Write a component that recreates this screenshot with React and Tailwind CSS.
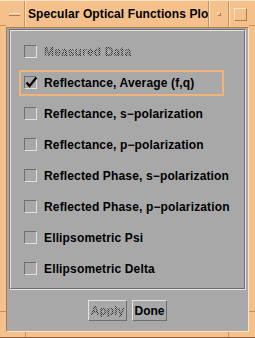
import { useState } from 'react'

const items = [
  { label: 'Measured Data', disabled: true },
  { label: 'Reflectance, Average (f,q)', checked: true, focus: true },
  { label: 'Reflectance, s\u2212polarization' },
  { label: 'Reflectance, p\u2212polarization' },
  { label: 'Reflected Phase, s\u2212polarization' },
  { label: 'Reflected Phase, p\u2212polarization' },
  { label: 'Ellipsometric Psi' },
  { label: 'Ellipsometric Delta' },
]

const stipple =
  'bg-[repeating-conic-gradient(#303030_0_25%,transparent_0_50%)] bg-[length:2px_2px] bg-clip-text text-transparent'

function CheckBox({ checked }) {
  return (
    <div className="relative w-[13px] h-[13px] shrink-0 border border-t-[#707070] border-l-[#707070] border-b-[#e0e0e0] border-r-[#e0e0e0] bg-[#a8a8a8]">
      {checked && (
        <svg className="absolute left-[0px] top-[-1px]" width="13" height="13" viewBox="0 0 13 13">
          <path d="M1.5 6.5 L4.5 10 L11.5 1.5" fill="none" stroke="#000" strokeWidth="2.2" />
        </svg>
      )}
    </div>
  )
}

function Row({ item, onToggle }) {
  return (
    <div className="h-[31px] flex items-center">
      <div
        className={`w-[205px] h-[26px] ml-[8px] flex items-center gap-[7px] pl-[3px] border-2 ${item.focus ? 'border-[#f0b478]' : 'border-transparent'}`}
        onClick={onToggle}
      >
        <CheckBox checked={item.checked} />
        <span
          className={`text-[12px] font-bold leading-none whitespace-nowrap tracking-[0.15px] ${item.disabled ? stipple : 'text-black'}`}
        >
          {item.label}
        </span>
      </div>
    </div>
  )
}

export default function App() {
  const [rows, setRows] = useState(items)

  function toggle(i) {
    if (rows[i].disabled) return
    setRows(rows.map((r, j) => (j === i ? { ...r, checked: !r.checked } : r)))
  }

  return (
    <div
      className="w-[255px] h-[338px] bg-[#f4c08c] flex flex-col relative border-t border-t-[#fde2c4] border-b border-b-[#8a5e36] overflow-hidden"
      style={{ fontFamily: '"Liberation Sans", Arial, sans-serif' }}
    >
      {/* title bar */}
      <div className="h-[26px] flex shrink-0">
        <div className="w-[25px] flex items-center justify-center pl-[4px] border-r border-r-[#c8915c]">
          <div className="w-[11px] h-[3px] border-t border-t-[#fde2c4] border-b border-b-[#b07c48] bg-[#f4c08c]" />
        </div>
        <div className="flex-1 min-w-0 flex items-center pl-[2px] border-l border-l-[#fde2c4] border-r border-r-[#c8915c] overflow-hidden">
          <span className="text-[12px] font-bold text-black whitespace-nowrap leading-none tracking-[0.1px]">Specular Optical Functions Plo</span>
        </div>
        <div className="w-[20px] flex items-center justify-center border-l border-l-[#fde2c4] border-r border-r-[#c8915c]">
          <div className="w-[4px] h-[4px] border border-t-[#fde2c4] border-l-[#fde2c4] border-b-[#b07c48] border-r-[#b07c48]" />
        </div>
        <div className="w-[26px] flex items-center justify-center pr-[4px] border-l border-l-[#fde2c4]">
          <div className="w-[13px] h-[13px] border border-t-[#fde2c4] border-l-[#fde2c4] border-b-[#b07c48] border-r-[#b07c48]" />
        </div>
      </div>

      {/* body */}
      <div className="flex-1 mx-[6px] mb-[5px] bg-[#a8a8a8] flex flex-col border-t border-t-[#b07c48] border-l border-l-[#b07c48] border-b border-b-[#fde2c4] border-r border-r-[#fde2c4]">
        <div className="mt-[1px] mx-[2px] h-[261px] border border-t-[#6e6e6e] border-l-[#6e6e6e] border-b-[#e4e4e4] border-r-[#e4e4e4]">
          <div className="h-full border border-t-[#e4e4e4] border-l-[#e4e4e4] border-b-[#6e6e6e] border-r-[#6e6e6e] pt-[5px]">
            {rows.map((item, i) => (
              <Row key={item.label} item={item} onToggle={() => toggle(i)} />
            ))}
          </div>
        </div>
        <div className="flex justify-center gap-[5px] mt-[10px]">
          <button className="w-[39px] h-[21px] border border-t-[#e4e4e4] border-l-[#e4e4e4] border-b-[#6e6e6e] border-r-[#6e6e6e] flex items-center justify-center">
            <span className={`text-[12px] font-bold leading-none ${stipple}`}>Apply</span>
          </button>
          <button className="w-[35px] h-[21px] border border-t-[#e4e4e4] border-l-[#e4e4e4] border-b-[#6e6e6e] border-r-[#6e6e6e] flex items-center justify-center">
            <span className="text-[12px] font-bold leading-none text-black">Done</span>
          </button>
        </div>
      </div>

      {/* corner handle marks */}
      <div className="absolute left-0 top-[24px] w-[6px] h-px bg-[#c8915c]" />
      <div className="absolute right-0 top-[24px] w-[6px] h-px bg-[#c8915c]" />
      <div className="absolute left-0 top-[310px] w-[6px] h-px bg-[#c8915c]" />
      <div className="absolute right-0 top-[310px] w-[6px] h-px bg-[#c8915c]" />
      <div className="absolute left-[25px] bottom-0 w-px h-[5px] bg-[#c8915c]" />
      <div className="absolute left-[228px] bottom-0 w-px h-[5px] bg-[#c8915c]" />
    </div>
  )
}
